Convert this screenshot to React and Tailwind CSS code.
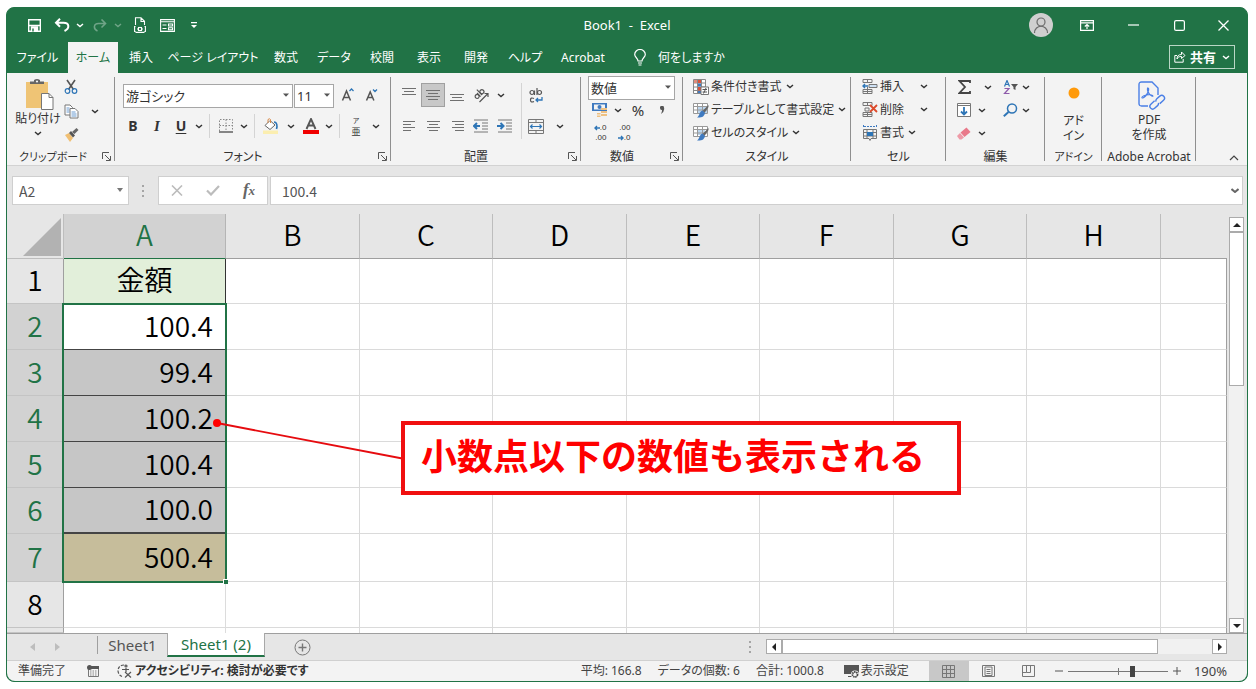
import React from "react";

const Chev = ({ className = "w-3" }) => (
  <button type="button" aria-label="オプション" className={"flex h-6 shrink-0 items-center justify-center " + className}>
    <ChevIcon />
  </button>
);
const ChevIcon = () => (
  <svg width="8" height="5" viewBox="0 0 8 5" fill="none" stroke="currentColor" strokeWidth="1.4"><path d="M1 1l3 2.6L7 1" /></svg>
);
const Caret = () => (
  <svg width="6" height="4" viewBox="0 0 6 4" className="pointer-events-none absolute right-1 top-1/2 -mt-0.5"><path d="M0 0.5h6L3 3.8z" fill="#555" /></svg>
);
const Btn = ({ label, className = "w-6", children }) => (
  <button type="button" aria-label={label} className={"flex h-6 shrink-0 items-center justify-center " + className}>{children}</button>
);
const Sep = ({ className = "mx-1 h-6" }) => <div className={"w-px shrink-0 bg-[#d4d4d4] " + className} />;

const Select = ({ label, value, className }) => (
  <div className={"relative shrink-0 " + className}>
    <select aria-label={label} className="h-full w-full appearance-none border border-[#a6a6a6] bg-white pl-0.5 text-[13px] leading-5 text-[#333] outline-none">
      <option>{value}</option>
    </select>
    <Caret />
  </div>
);

const Group = ({ title, width, launcher, children }) => (
  <section className={"relative flex shrink-0 flex-col " + width}>
    <div className="h-[76px]">{children}</div>
    <div className="flex h-4 items-center justify-center whitespace-nowrap text-[12px] leading-4 text-[#333]">{title}</div>
    {launcher && (
      <button type="button" aria-label={title + "の詳細"} className="absolute bottom-1 right-1">
        <svg width="9" height="9" viewBox="0 0 9 9" fill="none" stroke="#555"><path d="M.5 7V.5H7M3 3l5 5M8.500 4v4.500H4" /></svg>
      </button>
    )}
    <div className="absolute bottom-1 right-0 top-1 w-px bg-[#8f8f8f]" />
  </section>
);

const lineSets = {
  top: [[0, 14, 1], [2, 12, 4], [0, 14, 7]],
  middle: [[0, 14, 3], [2, 12, 6], [0, 14, 9], [2, 12, 12]],
  bottom: [[0, 14, 7], [2, 12, 10], [0, 14, 13]],
  left: [[1, 13, 3], [1, 9, 6], [1, 13, 9], [1, 9, 12]],
  center: [[1, 14, 3], [3, 12, 6], [1, 14, 9], [3, 12, 12]],
  right: [[2, 14, 3], [5, 14, 6], [2, 14, 9], [5, 14, 12]],
};
const Lines = ({ kind }) => (
  <svg width="15" height="15" viewBox="0 0 15 15" stroke="#707070" strokeWidth="1">
    {lineSets[kind].map(([a, b, y]) => <path key={y} d={`M${a} ${y - 0.5}H${b}`} />)}
  </svg>
);
const Indent = ({ flip }) => (
  <svg width="16" height="14" viewBox="0 0 16 14" fill="none">
    <path d="M1 1h14M9 4h6M9 7h6M9 10h6M1 13h14" stroke="#777" />
    <path d={flip ? "M0 7h6M3.500 4l3 3-3 3" : "M7 7H1.500M4 4L1 7l3 3"} stroke="#2e75b6" strokeWidth="2" />
  </svg>
);

const Scissors = () => (
  <svg width="14" height="16" viewBox="0 0 14 16" fill="none">
    <path d="M3 1l6.500 9.500M11 1L4.500 10.500" stroke="#555" strokeWidth="1.600" />
    <circle cx="3.500" cy="12" r="2.300" stroke="#2e75b6" strokeWidth="1.200" /><circle cx="10.500" cy="12" r="2.300" stroke="#2e75b6" strokeWidth="1.200" />
  </svg>
);
const Copy = () => (
  <svg width="15" height="15" viewBox="0 0 15 15" fill="#fff" stroke="#777">
    <path d="M1 1h5l2.500 2.500V11H1z" /><path d="M2.500 4h3M2.500 6h3M2.500 8h3" stroke="#6b9bd0" />
    <path d="M6 4.500h5l3 3V14H6z" /><path d="M7.500 8h4M7.500 10h5M7.500 12h5" stroke="#6b9bd0" />
  </svg>
);
const Brush = () => (
  <svg width="15" height="14" viewBox="0 0 15 14"><path d="M1 7l4-2 4 5-3 4z" fill="#f0bf73" /><path d="M5 5l2-2 4 4.500L9 9.500z" fill="#555" /><path d="M8 4l4.500-4L14.500 2 10.500 6z" fill="#666" /></svg>
);
const Paste = () => (
  <svg width="28" height="32" viewBox="0 0 28 32">
    <rect x="0" y="3" width="22" height="26" fill="#efc475" /><path d="M4 5V2.500h4V1q3-2 6 0v1.500h4V5z" fill="#666" /><circle cx="11" cy="2.500" r="1.100" fill="#f3f3f3" />
    <path d="M15.500 14.500H23l4 4V30.500H15.500z" fill="#fff" stroke="#777" /><path d="M23 14.500v4h4" fill="none" stroke="#777" />
  </svg>
);

const GridBase = ({ children }) => (
  <svg width="16" height="16" viewBox="0 0 16 16" fill="none">{children}</svg>
);
const CondFmt = () => (
  <GridBase>
    <path d="M.5 .5h12v14H.5zM.5 4h12M.5 8h12M.5 11.500h12M4.500 .5v14M8.500 .5v14" stroke="#888" fill="#fff" />
    <path d="M5 1h3v3H5zM5 8h3v3.500H5z" fill="#d9533b" /><path d="M5 4.500h3v3H5zM5 12h3v2H5z" fill="#3f7ac0" /><path d="M1 1h3v3H1z" fill="#e08b7b" />
    <path d="M8 8h7.500v7.500H8z" fill="#fff" stroke="#777" /><path d="M9.500 10.500H14M9.500 13H14M13 9l-2.500 5.500" stroke="#555" />
  </GridBase>
);
const TableFmt = ({ cell }) => (
  <GridBase>
    <path d="M.5 1.500h14v10H.5z" fill="#fff" /><path d={cell ? "M4 4h8v6H4z" : "M4 5h10v6H4z"} fill="#bcd6ee" />
    <path d="M.5 1.500h14v10H.5zM.5 4.500h14M.5 8h14M4.500 1.500v10M9.500 1.500v10" stroke="#999" />
    <path d="M15.500 3l-6 6 2 2 4-6z" fill="#666" /><path d="M9.500 8.500l2.500 2.500c-1 4.500-4 4.500-8 4.500 3-2 2-6 5.500-7z" fill="#3f7ac0" />
  </GridBase>
);
const InsertCell = () => (
  <GridBase>
    <path d="M1 .5h9v3H1zM5.500 .5v3M1 10.500h9v4H1zM5.500 8v6.500M1 12.500h9" stroke="#777" /><path d="M7 5.500h8v3H7z" fill="#cfe2f5" stroke="#777" /><path d="M6 7H1M3 5L1 7l2 2" stroke="#2e75b6" strokeWidth="1.400" />
  </GridBase>
);
const DeleteCell = () => (
  <GridBase>
    <path d="M1 .5h9v3H1zM5.500 .5v3M1 10.500h9v4H1zM5.500 10v4.500M1 12.500h9M3 6h4v3H3z" stroke="#777" /><path d="M8 3l7 7M15 3l-7 7" stroke="#dc4a2b" strokeWidth="1.800" />
  </GridBase>
);
const FormatCell = () => (
  <GridBase>
    <path d="M1.500 0v3M14.500 0v3M2 1.500h12" stroke="#3f7ac0" strokeDasharray="2 1" /><path d="M1.500 4.500h13v9H9l-1 2-1-2H1.500zM1.500 7.500h13M1.500 11h13M5 4.500v9M11 4.500v9" stroke="#777" /><path d="M5 7h6v4H5z" fill="#2e75b6" />
  </GridBase>
);

const MenuRow = ({ icon, text, chevClass = "ml-0" }) => (
  <div className="flex h-[23px] items-center">
    <button type="button" className="flex shrink-0 items-center gap-0.5 whitespace-nowrap text-[12px] leading-5">{icon}<span>{text}</span></button>
    <Chev className={"w-4 " + chevClass} />
  </div>
);

const TitleBar = () => (
  <header className="grid h-[34px] grid-cols-[1fr_auto_1fr] items-center text-white">
    <div className="flex items-center pl-[15px]">
      <Btn label="上書き保存">
        <svg width="13" height="13" viewBox="0 0 13 13" fill="none" stroke="#fff" strokeWidth="1.400"><path d="M.7 .7h11.600v11.600H.7zM.7 6.500h11.600" /><path d="M3.500 8h6v4.500h-6z" fill="#fff" /><path d="M5 9.500v3" stroke="#217346" /></svg>
      </Btn>
      <Btn label="元に戻す" className="ml-1 w-6">
        <svg width="16" height="14" viewBox="0 0 16 14" fill="none" stroke="#fff" strokeWidth="2"><path d="M6 .8L2 4.800l4 4M2.500 4.800h7c6 0 6.500 5.500 1 8.200" /></svg>
      </Btn>
      <Chev className="w-3" />
      <Btn label="やり直し" className="ml-0.5 w-6 opacity-35">
        <svg width="14" height="13" viewBox="0 0 14 13" fill="none" stroke="#fff" strokeWidth="1.600"><path d="M8.500 .5l4 4-4 4M12 4.500H5.500c-5 0-5.500 5.500-1 7.500" /></svg>
      </Btn>
      <span className="flex w-3 opacity-35"><Chev className="w-3" /></span>
      <Btn label="印刷プレビュー" className="ml-1 w-6">
        <svg width="12" height="16" viewBox="0 0 12 16" fill="none" stroke="#fff" strokeWidth="1.100"><path d="M1.500 8V.8H7l3.500 3.500V8M7 1v3.500h3.500M1.500 9.500H.6v5h1M10.500 9.500h.9v5h-1M1.500 15.400h9M3 12h1M8 12h1" /><rect x="4.500" y="10.500" width="3" height="3" /></svg>
      </Btn>
      <Btn label="フォーム" className="ml-[3px] w-6">
        <svg width="15" height="13" viewBox="0 0 15 13" fill="none" stroke="#fff" strokeWidth="1.100"><path d="M.6 .6h13.800v11.800H.6zM.6 2.800h13.800M2.500 6h4M2.500 9.500h4M8.500 5h4v2h-4zM8.500 8.800h4v2h-4z" /></svg>
      </Btn>
      <Btn label="クイック アクセス ツール バーのユーザー設定" className="ml-[3px] w-6">
        <svg width="6" height="6" viewBox="0 0 6 6" fill="#fff"><path d="M0 0h6v1.200H0zM0 3h6L3 6z" /></svg>
      </Btn>
    </div>
    <h1 className="whitespace-pre text-[13px] leading-5">Book1  -  Excel</h1>
    <div className="flex items-center justify-end pr-3">
      <button type="button" aria-label="アカウント" className="mr-[22px] flex size-6 items-center justify-center rounded-full bg-[#cfcfcf]">
        <svg width="16" height="17" viewBox="0 0 16 17" fill="none" stroke="#6b6b6b" strokeWidth="1.200"><circle cx="8" cy="5" r="4" /><path d="M1.500 16c0-9 13-9 13 0" /></svg>
      </button>
      <Btn label="リボンの表示オプション"><svg width="14" height="11" viewBox="0 0 14 11" fill="none" stroke="#fff" strokeWidth="1.200"><path d="M.6 .6h12.800v9.800H.6zM.6 2.800h12.800M7 9V5M4.800 6.500L7 4.500l2.200 2" /></svg></Btn>
      <Btn label="最小化" className="ml-[22px] w-6"><svg width="11" height="2" viewBox="0 0 11 2"><path d="M0 1h11" stroke="#fff" strokeWidth="1.200" /></svg></Btn>
      <Btn label="最大化" className="ml-[22px] w-6"><svg width="11" height="11" viewBox="0 0 11 11" fill="none"><rect x=".6" y=".6" width="9.800" height="9.800" rx="1.500" stroke="#fff" strokeWidth="1.200" /></svg></Btn>
      <Btn label="閉じる" className="ml-5 w-6"><svg width="11" height="11" viewBox="0 0 11 11"><path d="M.5 .5l10 10M10.500 .5l-10 10" stroke="#fff" strokeWidth="1.300" /></svg></Btn>
    </div>
  </header>
);

const tabs = [
  ["ファイル", "w-[61px]"], ["ホーム", "w-[50px]"], ["挿入", "w-[46px]"], ["ページ レイアウト", "w-[98px]"], ["数式", "w-12"],
  ["データ", "w-12"], ["校閲", "w-12"], ["表示", "w-[46px]"], ["開発", "w-12"], ["ヘルプ", "w-[50px]"], ["Acrobat", "w-[66px]"],
];
const Tabs = () => (
  <nav className="flex h-[31px] items-stretch text-[12px] leading-4 text-white">
    {tabs.map(([t, w], i) => (
      <button key={t} type="button" className={"shrink-0 whitespace-nowrap text-center " + w + (i === 1 ? " bg-[#f3f3f3] text-[#217346]" : "")}>{t}</button>
    ))}
    <button type="button" className="ml-[18px] flex shrink-0 items-center gap-3 whitespace-nowrap">
      <svg width="12" height="17" viewBox="0 0 12 17" fill="none" stroke="#fff" strokeWidth="1.200"><path d="M4 12c0-3-3.300-3.500-3.300-6.500a5.300 5 0 0110.600 0C11.300 8.500 8 9 8 12zM4 14h4M4.500 16h3" /></svg>
      何をしますか
    </button>
    <button type="button" className="mb-1 ml-auto mr-3 mt-[3px] flex shrink-0 items-center gap-1 border border-[#b9d6c5] px-1 text-[13px] font-bold">
      <svg width="12" height="12" viewBox="0 0 12 12" fill="none" stroke="#fff"><path d="M3 4.500H.8v6.700h8.400V8M3 8c0-3 1.500-4.500 4.500-4.500V1L11 4.500 7.500 7.500V5.500C5 5.500 4 6 3 8z" /></svg>
      <span>共有</span>
      <span className="ml-0.5"><ChevIcon /></span>
    </button>
  </nav>
);

const Ribbon = () => (
  <div className="flex h-[93px] border-b border-[#d2d2d2] bg-[#f3f3f3] text-[#333]">
    <Group title={<span className="mr-4 text-[11px]">クリップボード</span>} width="w-[108px]" launcher>
      <div className="flex pl-2">
        <button type="button" className="flex w-[46px] flex-col items-center pt-1.5 text-[12px] leading-5">
          <span className="pl-1"><Paste /></span>
          <span className="-mt-0.5 whitespace-nowrap">貼り付け</span>
          <span className="mt-0.5"><ChevIcon /></span>
        </button>
        <div className="pt-0.5">
          <Btn label="切り取り" className="w-5"><Scissors /></Btn>
          <div className="flex"><Btn label="コピー" className="w-5"><Copy /></Btn><Chev className="ml-1 w-5" /></div>
          <Btn label="書式のコピー" className="w-5"><Brush /></Btn>
        </div>
      </div>
    </Group>

    <Group title={<span className="mr-5">フォント</span>} width="w-[276px]" launcher>
      <div className="flex items-center pl-2 pt-2.5">
        <Select label="フォント" value="游ゴシック" className="h-6 w-[170px]" />
        <Select label="フォント サイズ" value="11" className="ml-px h-6 w-10" />
        <Btn label="フォント サイズの拡大" className="ml-0.5 w-6"><svg width="14" height="15" viewBox="0 0 14 15" fill="none"><path d="M1.500 12.500L5.500 3l4 9.500M3 9.500h5" stroke="#555" strokeWidth="1.500" /><path d="M8.500 3L10.500 1l2 2" stroke="#2e75b6" strokeWidth="1.300" /></svg></Btn>
        <Btn label="フォント サイズの縮小"><svg width="14" height="15" viewBox="0 0 14 15" fill="none"><path d="M1.500 12.500L5.200 4l3.700 8.500M3 9.500h4.500" stroke="#555" strokeWidth="1.500" /><path d="M8 1.500L10 3.500l2-2" stroke="#2e75b6" strokeWidth="1.300" /></svg></Btn>
      </div>
      <div className="flex items-center pl-1.5 pt-[7px] text-[14px] leading-6">
        <Btn label="太字"><b>B</b></Btn>
        <Btn label="斜体"><i className="font-['Liberation_Serif'] text-[15px] font-bold">I</i></Btn>
        <Btn label="下線"><u className="font-bold underline-offset-2">U</u></Btn>
        <Chev />
        <Sep />
        <Btn label="罫線"><svg width="14" height="14" viewBox="0 0 14 14" fill="none"><path d="M.5 12V.5h13V12M7 .5V12M.5 6.500h13" stroke="#888" strokeDasharray="1.500 1.500" /><path d="M0 13h14" stroke="#555" strokeWidth="1.400" /></svg></Btn>
        <Chev />
        <Sep />
        <Btn label="塗りつぶしの色"><svg width="16" height="16" viewBox="0 0 16 16" fill="none"><path d="M2 7.500l5-5 5 4.500-5 4.500z" fill="#fff" stroke="#666" /><path d="M5 5V1.500q1.500-1.500 2.500 0V5" stroke="#d98b4a" /><path d="M11 4c3 0 3.500 4 2.500 7" stroke="#2e75b6" strokeWidth="1.600" /><path d="M0 12.500h15V16H0z" fill="#fbeeb0" /></svg></Btn>
        <Chev className="w-4" />
        <Btn label="フォントの色"><svg width="16" height="16" viewBox="0 0 16 16"><path d="M3.500 11L8 1l4.500 10M5 7.500h6" fill="none" stroke="#555" strokeWidth="1.900" /><path d="M0 12h16v4H0z" fill="#f00000" /></svg></Btn>
        <Chev />
        <Sep />
        <Btn label="ふりがなの表示"><span className="flex flex-col items-center font-['Noto_Sans_CJK_JP',sans-serif]"><span className="text-[7px] leading-[10px]">ア</span><span className="text-[9px] leading-[13px]">亜</span></span></Btn>
        <Chev className="w-4" />
      </div>
    </Group>

    <Group title={<span className="mr-5">配置</span>} width="w-[190px]" launcher>
      <div className="flex pl-1.5 pt-2.5">
        <div className="flex flex-col gap-[7px]">
          <div className="flex items-center">
            <Btn label="上揃え"><Lines kind="top" /></Btn>
            <Btn label="上下中央揃え" className="w-6 border border-[#a0a0a0] bg-[#c8c8c8]"><Lines kind="middle" /></Btn>
            <Btn label="下揃え"><Lines kind="bottom" /></Btn>
            <Btn label="方向"><svg width="16" height="15" viewBox="0 0 16 15" fill="none" stroke="#555" strokeWidth="1.200"><g transform="rotate(-45 7 7)"><circle cx="4" cy="6" r="2" /><path d="M6.300 3.500v5M8.500 1v7.500" /><circle cx="10.700" cy="6" r="2" /></g><path d="M6.500 14L15 5.500M11.500 5.500H15V9" /></svg></Btn>
            <Chev className="w-4" />
          </div>
          <div className="flex items-center">
            <Btn label="左揃え"><Lines kind="left" /></Btn>
            <Btn label="中央揃え"><Lines kind="center" /></Btn>
            <Btn label="右揃え"><Lines kind="right" /></Btn>
            <Btn label="インデントを減らす"><Indent /></Btn>
            <Btn label="インデントを増やす"><Indent flip /></Btn>
          </div>
        </div>
        <Sep className="ml-1 h-14" />
        <div className="flex flex-col gap-[7px] pl-0.5">
          <Btn label="折り返して全体を表示する"><svg width="14" height="15" viewBox="0 0 14 15" fill="none"><circle cx="3" cy="4.500" r="2" stroke="#555" strokeWidth="1.200" /><path d="M5.500 2.500V7M8 0v7M5 10.500q-3.500-1.500-3.500 1.500t3.500 1.500" stroke="#555" strokeWidth="1.200" /><circle cx="10.500" cy="4.500" r="2" stroke="#555" strokeWidth="1.200" /><path d="M13 9v3H7M9 10l-2 2 2 2" stroke="#2e75b6" strokeWidth="1.300" /></svg></Btn>
          <div className="flex"><Btn label="セルを結合して中央揃え"><svg width="16" height="15" viewBox="0 0 16 15" fill="none"><path d="M.5 .5h15v14H.5zM.5 3.500h15M.5 11.500h15M8 .5v3M8 11.500v3" stroke="#777" /><path d="M2.500 7.500h11M4.500 5.500l-2 2 2 2M11.500 5.500l2 2-2 2" stroke="#2e75b6" strokeWidth="1.200" /></svg></Btn><Chev className="ml-1 w-4" /></div>
        </div>
      </div>
    </Group>

    <Group title={<span className="mr-5">数値</span>} width="w-[102px]" launcher>
      <div className="pl-[7px] pt-0.5">
        <Select label="表示形式" value="数値" className="h-6 w-[87px]" />
        <div className="flex h-[22px] items-center">
          <Btn label="通貨表示形式"><svg width="16" height="16" viewBox="0 0 16 16"><path d="M0 1h15v8H0z" fill="#3f7ac0" /><path d="M2 2.500h11v5H2z" fill="#f3f3f3" /><circle cx="7.500" cy="5" r="2" fill="#3f7ac0" /><path d="M9 6h6v2H9zM9 9h6v2H9zM9 12h6v2H9zM5 11h3.500v1.500H5zM5 13.500h3.500V15H5z" fill="#efc182" /></svg></Btn>
          <Chev className="w-3" />
          <Btn label="パーセント スタイル" className="ml-0.5 w-6 text-[15px]">%</Btn>
          <Btn label="桁区切りスタイル"><svg width="5" height="8" viewBox="0 0 5 8"><path d="M0 2a2 2 0 014-.5Q5 5 1 8q1.500-3 .8-4Q0 4 0 2z" fill="#555" /></svg></Btn>
        </div>
        <div className="flex items-center font-['Liberation_Sans'] text-[8px] leading-[10px]">
          <Btn label="小数点以下の表示桁数を増やす">
            <span className="flex flex-col items-end">
              <span className="flex items-center"><svg width="6" height="6" viewBox="0 0 6 6" fill="none" stroke="#2e75b6" strokeWidth="1.400"><path d="M6 3H1M3 1L1 3l2 2" /></svg>.0</span>
              <span>.00</span>
            </span>
          </Btn>
          <Btn label="小数点以下の表示桁数を減らす">
            <span className="flex flex-col items-end">
              <span>.00</span>
              <span className="flex items-center"><svg width="6" height="6" viewBox="0 0 6 6" fill="none" stroke="#2e75b6" strokeWidth="1.400"><path d="M0 3h5M3 1l2 2-2 2" /></svg>.0</span>
            </span>
          </Btn>
        </div>
      </div>
    </Group>

    <Group title="スタイル" width="w-[168px]">
      <div className="pl-2.5 pt-0.5">
        <MenuRow icon={<CondFmt />} text="条件付き書式" />
        <MenuRow icon={<TableFmt />} text="テーブルとして書式設定" />
        <MenuRow icon={<TableFmt cell />} text="セルのスタイル" />
      </div>
    </Group>

    <Group title="セル" width="w-[95px]">
      <div className="pl-[11px] pt-0.5">
        <MenuRow icon={<InsertCell />} text="挿入" chevClass="ml-3" />
        <MenuRow icon={<DeleteCell />} text="削除" chevClass="ml-3" />
        <MenuRow icon={<FormatCell />} text="書式" />
      </div>
    </Group>

    <Group title="編集" width="w-[99px]">
      <div className="flex pl-1.5 pt-0.5">
        <div className="w-[46px]">
          <div className="flex h-[23px]"><Btn label="合計"><svg width="13" height="14" viewBox="0 0 13 14" fill="none"><path d="M12 3V1H1.500L7 7l-5.500 6H12v-2" stroke="#444" strokeWidth="1.800" /></svg></Btn><Chev className="ml-1 w-4" /></div>
          <div className="flex h-[23px]"><Btn label="フィル"><svg width="14" height="14" viewBox="0 0 14 14" fill="#fff"><path d="M.5 .5h13v13H.5zM.5 2.500h13" stroke="#777" /><path d="M7 4v7M4 8.500l3 3 3-3" fill="none" stroke="#2e75b6" strokeWidth="1.800" /></svg></Btn><Chev className="w-3" /></div>
          <div className="flex h-[23px]"><Btn label="クリア"><svg width="14" height="13" viewBox="0 0 14 13"><path d="M3.500 5.500L9.500 .5l4 4.500-6 5z" fill="#e9798a" /><path d="M0 9l3-3 4 4.500L4.500 12.500H2.500z" fill="#ee9aa7" /></svg></Btn><Chev className="w-3" /></div>
        </div>
        <div>
          <div className="flex h-[23px]"><Btn label="並べ替えとフィルター"><svg width="15" height="15" viewBox="0 0 15 15" fill="none"><path d="M1.500 6.500L4 .5l2.500 6M2.500 4.500h3" stroke="#2e75b6" strokeWidth="1.200" /><path d="M1.500 8.500h4.500l-4.500 5h5" stroke="#8e5bab" strokeWidth="1.200" /><path d="M8 4h7l-2.500 3v3l-2-1V7z" fill="#555" /></svg></Btn><Chev className="w-2" /></div>
          <div className="flex h-[23px]"><Btn label="検索と選択"><svg width="15" height="14" viewBox="0 0 15 14" fill="none" stroke="#2e75b6"><circle cx="9" cy="5.500" r="4.500" strokeWidth="1.500" /><path d="M5.500 9L.8 13.200" strokeWidth="2" /></svg></Btn><Chev className="w-2" /></div>
        </div>
      </div>
    </Group>

    <Group title={<span className="text-[11px]">アドイン</span>} width="w-[57px]">
      <button type="button" className="flex w-full flex-col items-center pt-3.5 text-[12px] leading-[15px]">
        <svg width="12" height="12" viewBox="0 0 12 12"><circle cx="6" cy="6" r="5.500" fill="#ff9a0a" /></svg>
        <span className="mt-3.5">アド</span><span>イン</span>
      </button>
    </Group>

    <Group title="Adobe Acrobat" width="w-[94px]">
      <button type="button" className="flex w-full flex-col items-center pt-2 text-[12px] leading-[15px]">
        <svg width="28" height="29" viewBox="0 0 28 29" fill="none" stroke="#4a7fe6" strokeWidth="1.400" className="ml-1.5">
          <path d="M10 25H3.500Q1 25 1 22.500v-19Q1 1 3.500 1H14l6 6v7" />
          <path d="M9.500 7c3-.5 0 8-4.500 10-2 .5-1.500-2 3-3 3-.7 7-.5 7 1-.5 1.500-6.500-3-5.500-8z" strokeWidth="1.100" />
          <g transform="rotate(-42 19 21)"><path d="M18 18.500h-5a2.800 2.800 0 000 5.600h4a2.800 2.800 0 002.500-1.500" /><path d="M20 24.100h5a2.800 2.800 0 000-5.600h-4a2.800 2.800 0 00-2.500 1.500" /></g>
        </svg>
        <span className="mt-0.5">PDF</span><span>を作成</span>
      </button>
    </Group>
    <button type="button" aria-label="リボンを折りたたむ" className="mb-1 ml-auto mr-2 self-end">
      <svg width="10" height="6" viewBox="0 0 10 6" fill="none" stroke="#444" strokeWidth="1.200"><path d="M1 5l4-4 4 4" /></svg>
    </button>
  </div>
);

const Dots = () => (
  <svg width="3" height="12" viewBox="0 0 3 12" fill="#a5a5a5"><path d="M0 0h2v2H0zM0 5h2v2H0zM0 10h2v2H0z" /></svg>
);

const FormulaBar = () => (
  <div className="flex h-12 bg-[#e6e6e6] pb-[9px] pl-[5px] pr-1 pt-2.5 font-['Noto_Sans_CJK_JP',sans-serif] text-[14px] text-[#555]">
    <div className="relative w-[117px] shrink-0">
      <input aria-label="名前ボックス" defaultValue="A2" className="h-full w-full border border-[#cfcfcf] bg-white px-1.5 outline-none" />
      <svg width="6" height="4" viewBox="0 0 6 4" className="pointer-events-none absolute right-1.5 top-3"><path d="M0 0h6L3 4z" fill="#777" /></svg>
    </div>
    <div className="flex w-[29px] shrink-0 items-center justify-center"><Dots /></div>
    <div className="flex w-[110px] shrink-0 items-center justify-around border border-[#cfcfcf] bg-white">
      <Btn label="キャンセル"><svg width="12" height="11" viewBox="0 0 12 11"><path d="M1 .5l10 10M11 .5l-10 10" stroke="#bcbcbc" strokeWidth="1.600" /></svg></Btn>
      <Btn label="入力"><svg width="14" height="11" viewBox="0 0 14 11" fill="none"><path d="M1 5.500l4 4L13 1" stroke="#bcbcbc" strokeWidth="2.200" /></svg></Btn>
      <Btn label="関数の挿入"><span className="font-['Liberation_Serif'] text-[17px] font-bold italic leading-5 text-[#666]">f<span className="text-[13px]">x</span></span></Btn>
    </div>
    <div className="relative ml-0.5 flex-1">
      <input aria-label="数式バー" defaultValue="100.4" className="h-full w-full border border-[#cfcfcf] bg-white px-[11px] outline-none" />
      <svg width="8" height="5" viewBox="0 0 8 5" fill="none" className="pointer-events-none absolute right-1 top-3"><path d="M.5 1L4 4l3.500-3" stroke="#666" strokeWidth="2" /></svg>
    </div>
  </div>
);

const letters = ["B", "C", "D", "E", "F", "G", "H"];
const rows = [
  { n: 1, v: "金額", h: "h-[45px]", a: "bg-[#e2efda] text-center border-b-[#217346] border-r-[#333]" },
  { n: 2, v: "100.4", h: "h-[46px]", a: "bg-white text-right border-b-[#444]" },
  { n: 3, v: "99.4", h: "h-[46px]", a: "bg-[#c6c6c6] text-right border-b-[#444]" },
  { n: 4, v: "100.2", h: "h-[46px]", a: "bg-[#c6c6c6] text-right border-b-[#444]" },
  { n: 5, v: "100.4", h: "h-[46px]", a: "bg-[#c6c6c6] text-right border-b-[#444]" },
  { n: 6, v: "100.0", h: "h-[46px]", a: "bg-[#c6c6c6] text-right border-b-2 border-b-[#444]" },
  { n: 7, v: "500.4", h: "h-12", a: "bg-[#c6bd9b] text-right" },
  { n: 8, v: "", h: "h-[46px]", a: "border-b-[#dcdcdc] border-r-[#dcdcdc]" },
  { n: "", v: "", h: "h-[5px]", a: "border-b-0 border-r-[#dcdcdc]" },
];

const Sheet = () => (
  <div className="relative flex bg-[#e6e6e6]">
    <table className="min-w-0 flex-1 table-fixed border-separate border-spacing-0 font-['Noto_Sans_CJK_JP',sans-serif] text-[28px] font-[350] leading-8 text-black">
      <colgroup>
        <col className="w-[57px]" /><col className="w-[162px]" />
        {letters.map((l, i) => <col key={l} className={i % 2 ? "w-[133px]" : "w-[134px]"} />)}
        <col />
      </colgroup>
      <thead>
        <tr className="h-[45px]">
          <th aria-label="すべて選択" className="border-b border-r border-[#bdbdbd] p-0 align-bottom">
            <svg width="38" height="38" viewBox="0 0 38 38" className="mb-0.5 ml-auto mr-0.5"><path d="M38 0v38H0z" fill="#b2b2b2" /></svg>
          </th>
          <th className="border-b border-r border-b-[#217346] border-r-[#b5b5b5] bg-[#d2d2d2] p-0 pb-1 font-[350] text-[#217346]">A</th>
          {letters.map((l) => <th key={l} className="border-b border-r border-b-[#9f9f9f] border-r-[#bdbdbd] p-0 pb-1 font-[350]">{l}</th>)}
          <th className="border-b border-b-[#9f9f9f] p-0" />
        </tr>
      </thead>
      <tbody>
        {rows.map((r, i) => (
          <tr key={i} className={r.h}>
            <th className={"border-b border-r border-b-[#c4c4c4] border-r-[#9f9f9f] p-0 font-[350] " + (i < 8 ? "pb-1 " : "") + (r.n > 1 && r.n < 8 ? "bg-[#d2d2d2] text-[#217346]" : "")}>{r.n}</th>
            <td className={"border-b border-r px-3 pt-0 " + (i < 8 ? "pb-1 " : "pb-0 ") + (i > 6 ? "bg-white " : "") + r.a}>{r.v}</td>
            {letters.map((l) => <td key={l} className={"border-r border-[#dadada] bg-white p-0 " + (i < 8 ? "border-b" : "")} />)}
            <td className={"border-r border-b-[#dadada] border-r-[#9f9f9f] bg-white p-0 " + (i < 8 ? "border-b" : "")} />
          </tr>
        ))}
      </tbody>
    </table>

    <div className="pointer-events-none absolute left-[55px] top-[89px] h-[280px] w-[165px] border-2 border-[#217346]">
      <div className="absolute -bottom-[3px] -right-[3px] size-[5px] border-l border-t border-white bg-[#217346]" />
    </div>

    <div className="flex w-5 shrink-0 flex-col pl-0.5 pr-[3px] pt-[3px]">
      <button type="button" aria-label="上へスクロール" className="flex h-[15px] items-center justify-center border border-[#ababab] bg-white"><svg width="8" height="4" viewBox="0 0 8 4"><path d="M0 4h8L4 0z" fill="#222" /></svg></button>
      <div className="flex flex-1 flex-col bg-[#f1f1f1]"><div className="h-[154px] border border-[#ababab] bg-white" /></div>
      <button type="button" aria-label="下へスクロール" className="flex h-[15px] items-center justify-center border border-[#ababab] bg-white"><svg width="8" height="4" viewBox="0 0 8 4"><path d="M0 0h8L4 4z" fill="#222" /></svg></button>
    </div>

    <svg width="194" height="48" viewBox="0 0 194 48" className="pointer-events-none absolute left-[206px] top-[203px]"><path d="M4 6l188 36" stroke="#e60b0f" strokeWidth="1.800" /><circle cx="4" cy="6" r="4" fill="#f00" /></svg>
    <div className="absolute left-[394px] top-[207px] flex h-[74px] w-[560px] items-center whitespace-nowrap border-4 border-[#f00f10] bg-white pb-2 pl-4 font-['Noto_Sans_CJK_JP',sans-serif] text-[36px] font-bold leading-10 text-[#ff0000] [font-feature-settings:normal]">
      小数点以下の数値も表示される
    </div>
  </div>
);

const SheetTabs = () => (
  <div className="flex h-[27px] border-t border-[#9f9f9f] bg-[#e6e6e6] text-[15px] leading-5">
    <div className="flex w-[90px] shrink-0 items-center gap-5 pl-[23px]">
      <button type="button" aria-label="前のシート"><svg width="5" height="8" viewBox="0 0 5 8"><path d="M5 0v8L0 4z" fill="#bdbdbd" /></svg></button>
      <button type="button" aria-label="次のシート"><svg width="5" height="8" viewBox="0 0 5 8"><path d="M0 0v8l5-4z" fill="#bdbdbd" /></svg></button>
    </div>
    <button type="button" className="mb-1.5 mt-0.5 w-[70px] shrink-0 border-l border-[#9f9f9f] leading-4 text-[#555]">Sheet1</button>
    <button type="button" className="-mt-px mb-[3px] w-[98px] shrink-0 border-x border-b-2 border-x-[#a8a8a8] border-b-[#217346] bg-white text-[#217346]">Sheet1 (2)</button>
    <button type="button" aria-label="新しいシート" className="ml-[29px] shrink-0"><svg width="17" height="17" viewBox="0 0 17 17" fill="none" stroke="#777"><circle cx="8.500" cy="8.500" r="7.500" /><path d="M8.500 4.500v8M4.500 8.500h8" strokeWidth="1.400" /></svg></button>
    <div className="ml-auto mr-[14px] flex items-center"><Dots /></div>
    <div className="mb-1.5 mr-5 mt-[5px] flex w-[461px] shrink-0">
      <button type="button" aria-label="左へスクロール" className="flex w-4 items-center justify-center border border-[#ababab] bg-white"><svg width="4" height="8" viewBox="0 0 4 8"><path d="M4 0v8L0 4z" fill="#222" /></svg></button>
      <div className="flex flex-1 bg-[#f1f1f1]"><div className="w-[376px] border border-[#ababab] bg-white" /></div>
      <button type="button" aria-label="右へスクロール" className="flex w-[15px] items-center justify-center border border-[#ababab] bg-white"><svg width="4" height="8" viewBox="0 0 4 8"><path d="M0 0v8l4-4z" fill="#222" /></svg></button>
    </div>
  </div>
);

const StatusBar = () => (
  <footer className="flex h-[21px] items-center whitespace-nowrap rounded-b-lg border-t border-[#d0d0d0] bg-[#f3f3f3] text-[12px] leading-4 text-[#444]">
    <span className="w-20 shrink-0 pl-[11px]">準備完了</span>
    <button type="button" aria-label="マクロの記録"><svg width="12" height="12" viewBox="0 0 12 12" fill="none"><path d="M1.500 3v8.500h10V1.500H5" stroke="#777" /><path d="M4 1h8v3H4z" fill="#555" /><circle cx="2.500" cy="2.500" r="2.500" fill="#555" /><path d="M3 6h7M3 8h7M3 10h7" stroke="#888" strokeDasharray="1.500 1" /></svg></button>
    <button type="button" className="ml-[18px] flex items-center gap-0.5 font-bold text-[#333]">
      <svg width="16" height="14" viewBox="0 0 16 14" fill="none" stroke="#555" strokeWidth="1.200"><path d="M7 1Q1 1.500 1 7q.5 4 4 5.500" strokeDasharray="3 1.500" /><circle cx="9" cy="2" r="1" /><path d="M5 5.500h7M9 4v4M8 8l6 5.500M14 8l-6 5.500" /></svg>
      アクセシビリティ: 検討が必要です
    </button>
    <span className="ml-auto">平均: 166.8</span>
    <span className="ml-4">データの個数: 6</span>
    <span className="ml-4">合計: 1000.8</span>
    <button type="button" className="ml-5 flex items-center gap-0.5">
      <svg width="15" height="15" viewBox="0 0 15 15"><path d="M0 1h15v9H0zM4 12h5v1H4z" fill="#555" /><circle cx="11" cy="10.500" r="4" fill="#f3f3f3" /><circle cx="11" cy="10.500" r="2.500" fill="none" stroke="#444" strokeWidth="1.800" strokeDasharray="1.500 .6" /></svg>
      表示設定
    </button>
    <div className="ml-5 flex self-stretch">
      <button type="button" aria-label="標準" className="flex w-10 items-center justify-center bg-[#c8c8c8]"><svg width="13" height="13" viewBox="0 0 13 13" fill="none" stroke="#777"><path d="M.5 .5h12v12H.5zM.5 4.500h12M.5 8.500h12M4.500 .5v12M8.500 .5v12" /></svg></button>
      <button type="button" aria-label="ページ レイアウト" className="flex w-10 items-center justify-center"><svg width="13" height="12" viewBox="0 0 13 12" fill="none" stroke="#777"><path d="M.5 .5h12v11H.5zM3 2h7v8.500H3zM4.500 4.500h4M4.500 6.500h4M4.500 8.500h4" /></svg></button>
      <button type="button" aria-label="改ページ プレビュー" className="flex w-10 items-center justify-center"><svg width="13" height="12" viewBox="0 0 13 12" fill="none" stroke="#777"><path d="M.5 .5h12v11H.5zM4.500 .5v7H.5M8.500 .5v7M4.500 7.500h4" /></svg></button>
    </div>
    <button type="button" aria-label="縮小" className="ml-1.5"><svg width="8" height="8" viewBox="0 0 8 8"><path d="M0 4h8" stroke="#555" /></svg></button>
    <div className="relative ml-[5px] flex w-[100px] items-center">
      <div className="absolute left-0 top-1/2 h-px w-full bg-[#777]" />
      <div className="absolute left-1/2 top-1/2 -mt-[3px] h-[7px] w-px bg-[#777]" />
      <input type="range" aria-label="ズーム" min="0" max="100" defaultValue="65" className="relative h-4 w-full appearance-none bg-transparent [&::-webkit-slider-thumb]:h-[11px] [&::-webkit-slider-thumb]:w-[5px] [&::-webkit-slider-thumb]:appearance-none [&::-webkit-slider-thumb]:bg-[#444]" />
    </div>
    <button type="button" aria-label="拡大" className="ml-[5px]"><svg width="8" height="8" viewBox="0 0 8 8"><path d="M0 4h8M4 0v8" stroke="#555" /></svg></button>
    <span className="ml-[13px] mr-5 text-[13px]">190%</span>
  </footer>
);

export default function App() {
  return (
    <div className="min-h-screen bg-white pb-2 pl-1.5 pr-2 pt-[7px] font-['Noto_Sans','Noto_Sans_CJK_JP',sans-serif] [font-feature-settings:'palt']">
      <main className="flex flex-col rounded-lg border border-[#217346] bg-[#217346]">
        <TitleBar />
        <Tabs />
        <Ribbon />
        <FormulaBar />
        <Sheet />
        <SheetTabs />
        <StatusBar />
      </main>
    </div>
  );
}
